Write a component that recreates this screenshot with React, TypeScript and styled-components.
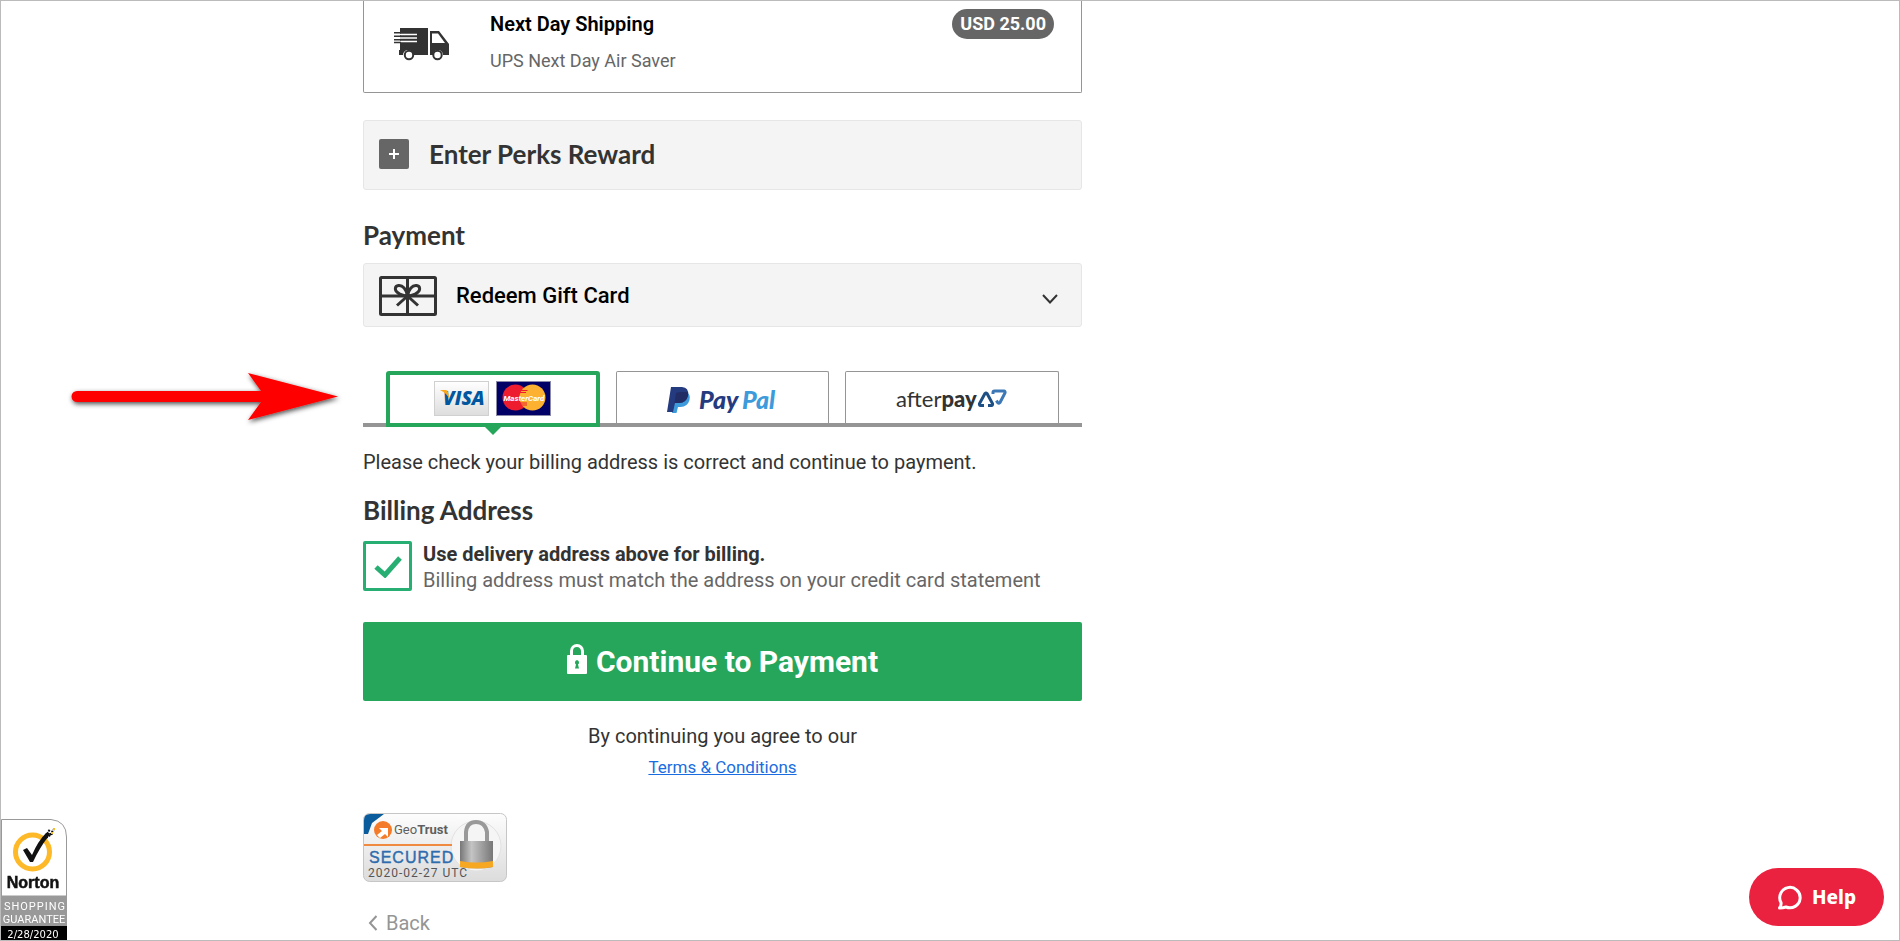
import React, { useState } from "react";
import styled, { createGlobalStyle } from "styled-components";

const GlobalStyle = createGlobalStyle`
  *, *::before, *::after { box-sizing: border-box; }
  body {
    margin: 0;
    background: #fff;
    color: #333;
    font-family: Roboto, "Liberation Sans", sans-serif;
    font-size: 20px;
    line-height: 26px;
  }
  h2, p { margin: 0; }
  button { font: inherit; color: inherit; cursor: pointer; }
`;

const Page = styled.div`
  min-height: 100vh;
  border: 1px solid #bbb;
  padding: 0 16px;
`;

const Container = styled.div`
  display: grid;
  grid-template-columns: minmax(0, 719px) 1fr;
  max-width: 1174px;
  margin: 0 auto;
`;

const Checkout = styled.main`
  display: flex;
  flex-direction: column;
`;

const ShippingOption = styled.section`
  display: flex;
  align-items: flex-start;
  padding: 8px 27px 17px 30px;
  border: 1px solid #959595;
  border-top: 0;
  border-radius: 0 0 2px 2px;
`;

const TruckIcon = styled.svg`
  width: 56px;
  height: 34px;
  margin: 18px 40px 0 0;
  flex: none;
`;

const ShippingText = styled.div`
  flex: 1;
  display: flex;
  flex-direction: column;
  gap: 8px;
`;

const ShippingName = styled.span`
  color: #000;
  font-size: 20px;
  font-weight: 600;
  line-height: 30px;
`;

const ShippingDetail = styled.span`
  color: #666;
  font-size: 18px;
  line-height: 28px;
`;

const Price = styled.span`
  padding: 0 8px;
  border-radius: 15px;
  background: #666;
  color: #fff;
  font-size: 18px;
  font-weight: 700;
  line-height: 30px;
`;

const Panel = styled.button`
  display: flex;
  align-items: center;
  width: 100%;
  min-height: 64px;
  padding: 2px 23px 0 15px;
  border: 1px solid #e6e6e6;
  border-radius: 3px;
  background: #f4f4f4;
  text-align: left;
`;

const PerksPanel = styled(Panel)`
  min-height: 70px;
  margin-top: 27px;
  padding: 0 23px 2px 15px;
`;

const PlusBox = styled.svg`
  width: 30px;
  height: 30px;
  margin-right: 20px;
  border-radius: 2px;
  background: #666;
`;

const headingFont = `
  color: #333;
  font-family: Lato, Roboto, sans-serif;
  font-size: 26px;
  font-weight: 700;
  line-height: 32px;
`;

const PanelHeading = styled.span`
  ${headingFont}
`;

const Heading = styled.h2`
  ${headingFont}
`;

const PaymentHeading = styled(Heading)`
  margin: 29px 0 12px;
`;

const BillingHeading = styled(Heading)`
  margin: 19px 0 13px;
`;

const GiftIcon = styled.svg`
  width: 58px;
  height: 40px;
  margin-right: 19px;
`;

const GiftLabel = styled.span`
  flex: 1;
  color: #000;
  font-size: 22px;
  font-weight: 500;
`;

const Chevron = styled.svg`
  width: 16px;
  height: 11px;
  margin-top: 6px;
`;

const TabArea = styled.div`
  position: relative;
  margin-top: 44px;
`;

const Tabs = styled.div`
  display: grid;
  grid-template-columns: repeat(3, minmax(0, 1fr));
  gap: 16px;
  padding: 0 23px;
  border-bottom: 4px solid #959595;
`;

const Tab = styled.button<{ $active: boolean }>`
  position: relative;
  display: flex;
  align-items: center;
  justify-content: center;
  gap: 7px;
  height: ${(p) => (p.$active ? 56 : 52)}px;
  margin-bottom: ${(p) => (p.$active ? -4 : 0)}px;
  padding: 0;
  border: ${(p) => (p.$active ? "4px solid #26a65b" : "1px solid #959595")};
  border-bottom-width: ${(p) => (p.$active ? 4 : 0)}px;
  border-radius: ${(p) => (p.$active ? "3px 3px 0 0" : "2px 2px 0 0")};
  background: #fff;

  &::after {
    content: "";
    display: ${(p) => (p.$active ? "block" : "none")};
    position: absolute;
    top: 100%;
    left: 50%;
    margin: 4px 0 0 -8px;
    border: 8px solid transparent;
    border-top-color: #26a65b;
    border-bottom-width: 0;
  }
`;

const CardLogo = styled.svg`
  width: 55px;
  height: 35px;
  margin-bottom: 1px;
`;

const BrandLogo = styled.svg`
  width: 112px;
  height: 36px;
  margin-top: 6px;
`;

const Pointer = styled.svg`
  position: absolute;
  top: -8px;
  right: 100%;
  width: 280px;
  height: 66px;
  margin-right: 20px;
  pointer-events: none;
`;

const Notice = styled.p`
  margin-top: 22px;
`;

const CheckRow = styled.label`
  display: flex;
  align-items: center;
  gap: 11px;
  cursor: pointer;
`;

const CheckFrame = styled.span`
  display: grid;
  width: 49px;
  height: 50px;
  place-items: center;

  & > * { grid-area: 1 / 1; }
`;

const CheckInput = styled.input`
  appearance: none;
  width: 100%;
  height: 100%;
  margin: 0;
  border: 3px solid #27ae72;
  border-radius: 2px;
  background: #fff;
`;

const Tick = styled.svg`
  width: 28px;
  height: 23px;
  pointer-events: none;
`;

const CheckText = styled.span`
  display: flex;
  flex-direction: column;
  padding-top: 2px;
  color: #666;
`;

const Strong = styled.strong`
  color: #333;
  font-weight: 700;
`;

const Submit = styled.button`
  display: flex;
  align-items: center;
  justify-content: center;
  gap: 9px;
  min-height: 79px;
  margin-top: 29px;
  padding: 0 8px;
  border: 0;
  border-radius: 2px;
  background: #26a65b;
  color: #fff;
  font-size: 30px;
  font-weight: 700;
`;

const LockIcon = styled.svg`
  width: 20px;
  height: 30px;
  margin-bottom: 6px;
`;

const Agreement = styled.div`
  display: flex;
  flex-direction: column;
  align-items: center;
  gap: 5px;
  margin-top: 22px;
`;

const TermsLink = styled.a`
  color: #1a6de0;
  font-size: 17px;
`;

const TrustSeal = styled.svg`
  width: 145px;
  height: 70px;
  margin-top: 33px;
`;

const BackLink = styled.a`
  display: flex;
  align-items: center;
  align-self: flex-start;
  gap: 8px;
  margin: 27px 0 4px 5px;
  color: #959595;
  text-decoration: none;
`;

const BackChevron = styled.svg`
  width: 10px;
  height: 16px;
`;

const NortonSeal = styled.aside`
  position: fixed;
  left: 1px;
  bottom: 1px;
  width: 66px;
  height: 121px;
`;

const HelpButton = styled.button`
  position: fixed;
  right: 16px;
  bottom: 15px;
  display: flex;
  align-items: center;
  justify-content: center;
  gap: 10px;
  width: 135px;
  height: 58px;
  padding: 0;
  border: 0;
  border-radius: 29px;
  background: #eb2140;
  color: #fff;
  font-family: "Noto Sans", sans-serif;
  font-size: 19px;
  font-weight: 800;
`;

const HelpIcon = styled.svg`
  width: 25px;
  height: 25px;
`;

const Truck = () => (
  <TruckIcon viewBox="0 0 56 34" aria-hidden="true">
    <path d="M6 1h28v27H19a5 5 0 0 0-10 0H5v-5h1z" fill="#333" />
    <path d="M6 7.500h17M6 11h17M6 14.500h17" stroke="#fff" strokeWidth="1.500" />
    <path d="M0 5.800h7M0 9.200h7M0 12.700h7M0 15.600h7" stroke="#333" strokeWidth="1.500" />
    <path d="M36 4h9l10 13v11h-6a5 5 0 0 0-10 0h-3z" fill="#333" />
    <path d="M38 6.500h6l7 9.500H38z" fill="#fff" />
    <circle cx="15" cy="28" r="4.200" fill="#fff" stroke="#333" strokeWidth="2" />
    <circle cx="43.500" cy="28" r="4.200" fill="#fff" stroke="#333" strokeWidth="2" />
  </TruckIcon>
);

const Gift = () => (
  <GiftIcon viewBox="0 0 58 40" fill="none" stroke="#333" strokeWidth="3" aria-hidden="true">
    <rect x="1.500" y="1.500" width="55" height="37" rx="1" />
    <path d="M28.500 2v36M2 20h54" />
    <path d="M28.500 20c-1-7-5-11-9-10.500-4 .5-4 5-1 7 3 2.500 6 3.500 10 3.500zM28.500 20c1-7 5-11 9-10.500 4 .5 4 5 1 7-3 2.500-6 3.500-10 3.500zM28.500 20L18 29.500M28.500 20L39 29.500" />
  </GiftIcon>
);

const VisaLogo = () => (
  <CardLogo viewBox="0 0 55 35" role="img" aria-label="Visa">
    <defs>
      <linearGradient id="visaBg" x1="0" y1="0" x2="0" y2="1">
        <stop offset="0" stopColor="#fff" />
        <stop offset="1" stopColor="#ddd" />
      </linearGradient>
    </defs>
    <rect x=".5" y=".5" width="54" height="34" fill="url(#visaBg)" stroke="#d0d0d0" />
    <text x="9" y="24" fill="#00579f" fontFamily="Open Sans, sans-serif" fontSize="19" fontStyle="italic" fontWeight="800">VISA</text>
    <path d="M6 9h5.500q2 0 2.500 2l1.500 7q-3-6-9.500-9z" fill="#faa61a" />
  </CardLogo>
);

const MasterCardLogo = () => (
  <CardLogo viewBox="0 0 55 35" role="img" aria-label="MasterCard">
    <rect x=".5" y=".5" width="54" height="34" fill="#000066" stroke="#8a8aa8" />
    <circle cx="19.500" cy="16.500" r="13" fill="#ed1c2e" />
    <circle cx="36.500" cy="16.500" r="13" fill="#fcb131" />
    <path d="M24.500 9.500h7M24 11.500h6M24 22h7M25 24h6" stroke="#ed1c2e" />
    <text x="28" y="20" textAnchor="middle" fill="#fff" fontFamily="Roboto, sans-serif" fontSize="8" fontStyle="italic" fontWeight="700">MasterCard</text>
  </CardLogo>
);

const PayPalLogo = () => (
  <BrandLogo viewBox="0 -3 112 36" role="img" aria-label="PayPal">
    <path d="M9 6h11q5 2 3.500 8-2 7-9 7h-2.500l-1.500 6H6z" fill="#3d9bdc" />
    <path d="M5 1h11q7 .5 6 8-1.500 8-9 8H9l-2 9H1z" fill="#253b80" />
    <path d="M10 7q2-1 6-1h6q.5 2 0 4-2 7-9 7H8.500z" fill="#222d65" />
    <text y="23" fontFamily="Lato, sans-serif" fontSize="25" fontStyle="italic" fontWeight="900">
      <tspan x="33" fill="#253b80">Pay</tspan>
      <tspan x="76" fill="#3d9bdc">Pal</tspan>
    </text>
  </BrandLogo>
);

const AfterpayLogo = () => (
  <BrandLogo viewBox="0 -3 112 36" role="img" aria-label="afterpay">
    <text x="0" y="21" fill="#333" fontFamily="Lato, sans-serif" fontSize="22">
      after<tspan fontWeight="900">pay</tspan>
    </text>
    <path d="M88 19.500h-3.500q-1.500-.5-1-2l5.500-10q1-1 2 0l5.500 10q.5 1.500-1 2H92" fill="none" stroke="#1d4f85" strokeWidth="3" />
    <path d="M97 8V6.500q0-1.500 1.500-1.500h9.500q1.500.5 1 2l-5 9.500q-1.500 1.500-2.500 0l-1-2" fill="none" stroke="#3b78b5" strokeWidth="3" />
  </BrandLogo>
);

const GeoTrustSeal = () => (
  <TrustSeal viewBox="0 0 145 70" role="img" aria-label="GeoTrust secured">
    <defs>
      <linearGradient id="sealBg" x1="0" y1="0" x2="0" y2="1">
        <stop offset="0" stopColor="#fdfdfd" />
        <stop offset="1" stopColor="#dcdcdc" />
      </linearGradient>
      <linearGradient id="sealLock" x1="0" x2="1">
        <stop offset="0" stopColor="#777" />
        <stop offset=".35" stopColor="#c4c4c4" />
        <stop offset="1" stopColor="#777" />
      </linearGradient>
    </defs>
    <rect x=".5" y=".5" width="143" height="68" rx="6" fill="url(#sealBg)" stroke="#c6c6c6" />
    <path d="M1 7q0-6 6-6h14L9 10 5 21H1z" fill="#0b5c9c" />
    <circle cx="20" cy="17" r="9" fill="#f47b29" />
    <path d="M14 22l5-4-3-3h9v9l-3-3-5 4z" fill="#fff" />
    <text x="31" y="21" fill="#5f5f5f" fontFamily="Roboto, sans-serif" fontSize="13">Geo<tspan fontWeight="700">Trust</tspan></text>
    <circle cx="113" cy="33" r="25" fill="#f5f5f5" stroke="#e2e2e2" />
    <path d="M1 32h88" stroke="#f08a40" strokeWidth="2" />
    <text x="6" y="50" fill="#2e6cae" stroke="#2e6cae" strokeWidth=".4" fontFamily="Liberation Sans, sans-serif" fontSize="16" letterSpacing="1">SECURED</text>
    <text x="5" y="64" fill="#555" fontFamily="Roboto, sans-serif" fontSize="12" letterSpacing="1">2020-02-27 UTC</text>
    <path d="M103 30V19q1-10 10-10t11 10v11" fill="none" stroke="#999" strokeWidth="4" />
    <path d="M97 28h33v26q-16 3-33 0z" fill="url(#sealLock)" />
    <path d="M97 48q16 3 33 0v6q-16 3-33 0z" fill="#f7a823" />
  </TrustSeal>
);

const NortonArt = () => (
  <svg width="66" height="121" viewBox="0 0 66 121" role="img" aria-label="Norton Shopping Guarantee">
    <path d="M.5 77V.5H50Q65.500 2 65.500 18V77z" fill="#fff" stroke="#999" />
    <circle cx="31.500" cy="33" r="17" fill="none" stroke="#fdb927" strokeWidth="5" />
    <path d="M22 31l4-2 5 7q6-14 14-22l4 0-2 4q-8 10-15 25h-3z" fill="#111" />
    <path d="M46 15l3-5M49 16l4-6M45 19l7-5" stroke="#111" strokeWidth="2" strokeDasharray="2 1" />
    <path d="M52 10h2M50 14h2" stroke="#fdb927" strokeWidth="2" />
    <text x="32" y="69" textAnchor="middle" fill="#111" stroke="#111" strokeWidth=".5" fontFamily="Liberation Sans, sans-serif" fontSize="16" fontWeight="700">Norton</text>
    <path d="M0 77h66v30H0z" fill="#999" />
    <g fill="#fff" fontFamily="Roboto, sans-serif" fontSize="11" textAnchor="middle">
      <text x="34" y="91" letterSpacing="1">SHOPPING</text>
      <text x="33" y="104">GUARANTEE</text>
    </g>
    <path d="M0 107h66v14H0z" fill="#000" />
    <text x="32" y="119" textAnchor="middle" fill="#fff" fontFamily="DejaVu Sans, sans-serif" fontSize="10">2/28/2020</text>
  </svg>
);

const ArrowPointer = () => (
  <Pointer viewBox="0 0 280 66" aria-hidden="true">
    <defs>
      <filter id="arrowShadow" x="-10%" y="-30%" width="120%" height="170%">
        <feDropShadow dx="1" dy="2" stdDeviation="2.500" floodColor="#000" floodOpacity=".7" />
      </filter>
    </defs>
    <path d="M14 28H198L185 10 275 33.500 185 57 198 39H14A5.500 5.500 0 0 1 14 28z" fill="#f00" filter="url(#arrowShadow)" />
  </Pointer>
);

const methods = [
  { id: "card", label: "Credit card", art: <><VisaLogo /><MasterCardLogo /></> },
  { id: "paypal", label: "PayPal", art: <PayPalLogo /> },
  { id: "afterpay", label: "Afterpay", art: <AfterpayLogo /> },
];

export default function App() {
  const [method, setMethod] = useState("card");
  const [sameAddress, setSameAddress] = useState(true);

  return (
    <>
      <GlobalStyle />
      <Page>
        <Container>
          <Checkout>
            <ShippingOption>
              <Truck />
              <ShippingText>
                <ShippingName>Next Day Shipping</ShippingName>
                <ShippingDetail>UPS Next Day Air Saver</ShippingDetail>
              </ShippingText>
              <Price>USD 25.00</Price>
            </ShippingOption>

            <PerksPanel type="button">
              <PlusBox viewBox="0 0 30 30" aria-hidden="true">
                <path d="M15 10v10M10 15h10" stroke="#fff" strokeWidth="2" />
              </PlusBox>
              <PanelHeading>Enter Perks Reward</PanelHeading>
            </PerksPanel>

            <PaymentHeading>Payment</PaymentHeading>
            <Panel type="button">
              <Gift />
              <GiftLabel>Redeem Gift Card</GiftLabel>
              <Chevron viewBox="0 0 16 11" aria-hidden="true">
                <path d="M1 1l7 7.500L15 1" fill="none" stroke="#333" strokeWidth="2" />
              </Chevron>
            </Panel>

            <TabArea>
              <ArrowPointer />
              <Tabs role="tablist">
                {methods.map((m) => (
                  <Tab
                    key={m.id}
                    type="button"
                    role="tab"
                    aria-label={m.label}
                    aria-selected={m.id === method}
                    $active={m.id === method}
                    onClick={() => setMethod(m.id)}
                  >
                    {m.art}
                  </Tab>
                ))}
              </Tabs>
            </TabArea>

            <Notice>Please check your billing address is correct and continue to payment.</Notice>

            <BillingHeading>Billing Address</BillingHeading>
            <CheckRow>
              <CheckFrame>
                <CheckInput
                  type="checkbox"
                  checked={sameAddress}
                  onChange={(e) => setSameAddress(e.target.checked)}
                />
                {sameAddress && (
                  <Tick viewBox="0 0 28 23" aria-hidden="true">
                    <path d="M2 12l9 8L26 3" fill="none" stroke="#27ae72" strokeWidth="5" />
                  </Tick>
                )}
              </CheckFrame>
              <CheckText>
                <Strong>Use delivery address above for billing.</Strong>
                <span>Billing address must match the address on your credit card statement</span>
              </CheckText>
            </CheckRow>

            <Submit type="submit">
              <LockIcon viewBox="0 0 20 30" aria-hidden="true">
                <path d="M4.500 12V7a5.500 5.500 0 0 1 11 0v5" fill="none" stroke="#fff" strokeWidth="3" />
                <rect y="11" width="20" height="19" rx="1" fill="#fff" />
                <path d="M10 16a2.500 2.500 0 0 1 1 4.500l1 4H8l1-4A2.500 2.500 0 0 1 10 16z" fill="#26a65b" />
              </LockIcon>
              Continue to Payment
            </Submit>

            <Agreement>
              <span>By continuing you agree to our</span>
              <TermsLink href="#terms">Terms &amp; Conditions</TermsLink>
            </Agreement>

            <GeoTrustSeal />

            <BackLink href="#back">
              <BackChevron viewBox="0 0 10 16" aria-hidden="true">
                <path d="M8.500 1L2 8l6.500 7" fill="none" stroke="#959595" strokeWidth="2" />
              </BackChevron>
              Back
            </BackLink>
          </Checkout>
        </Container>
      </Page>

      <NortonSeal>
        <NortonArt />
      </NortonSeal>
      <HelpButton type="button">
        <HelpIcon viewBox="0 0 25 25" aria-hidden="true">
          <path d="M4 17.500A10.200 10.200 0 1 1 9 22q-3 1-6.500 1 2-2.500 1.500-5.500z" fill="none" stroke="#fff" strokeWidth="3" strokeLinejoin="round" />
        </HelpIcon>
        Help
      </HelpButton>
    </>
  );
}
